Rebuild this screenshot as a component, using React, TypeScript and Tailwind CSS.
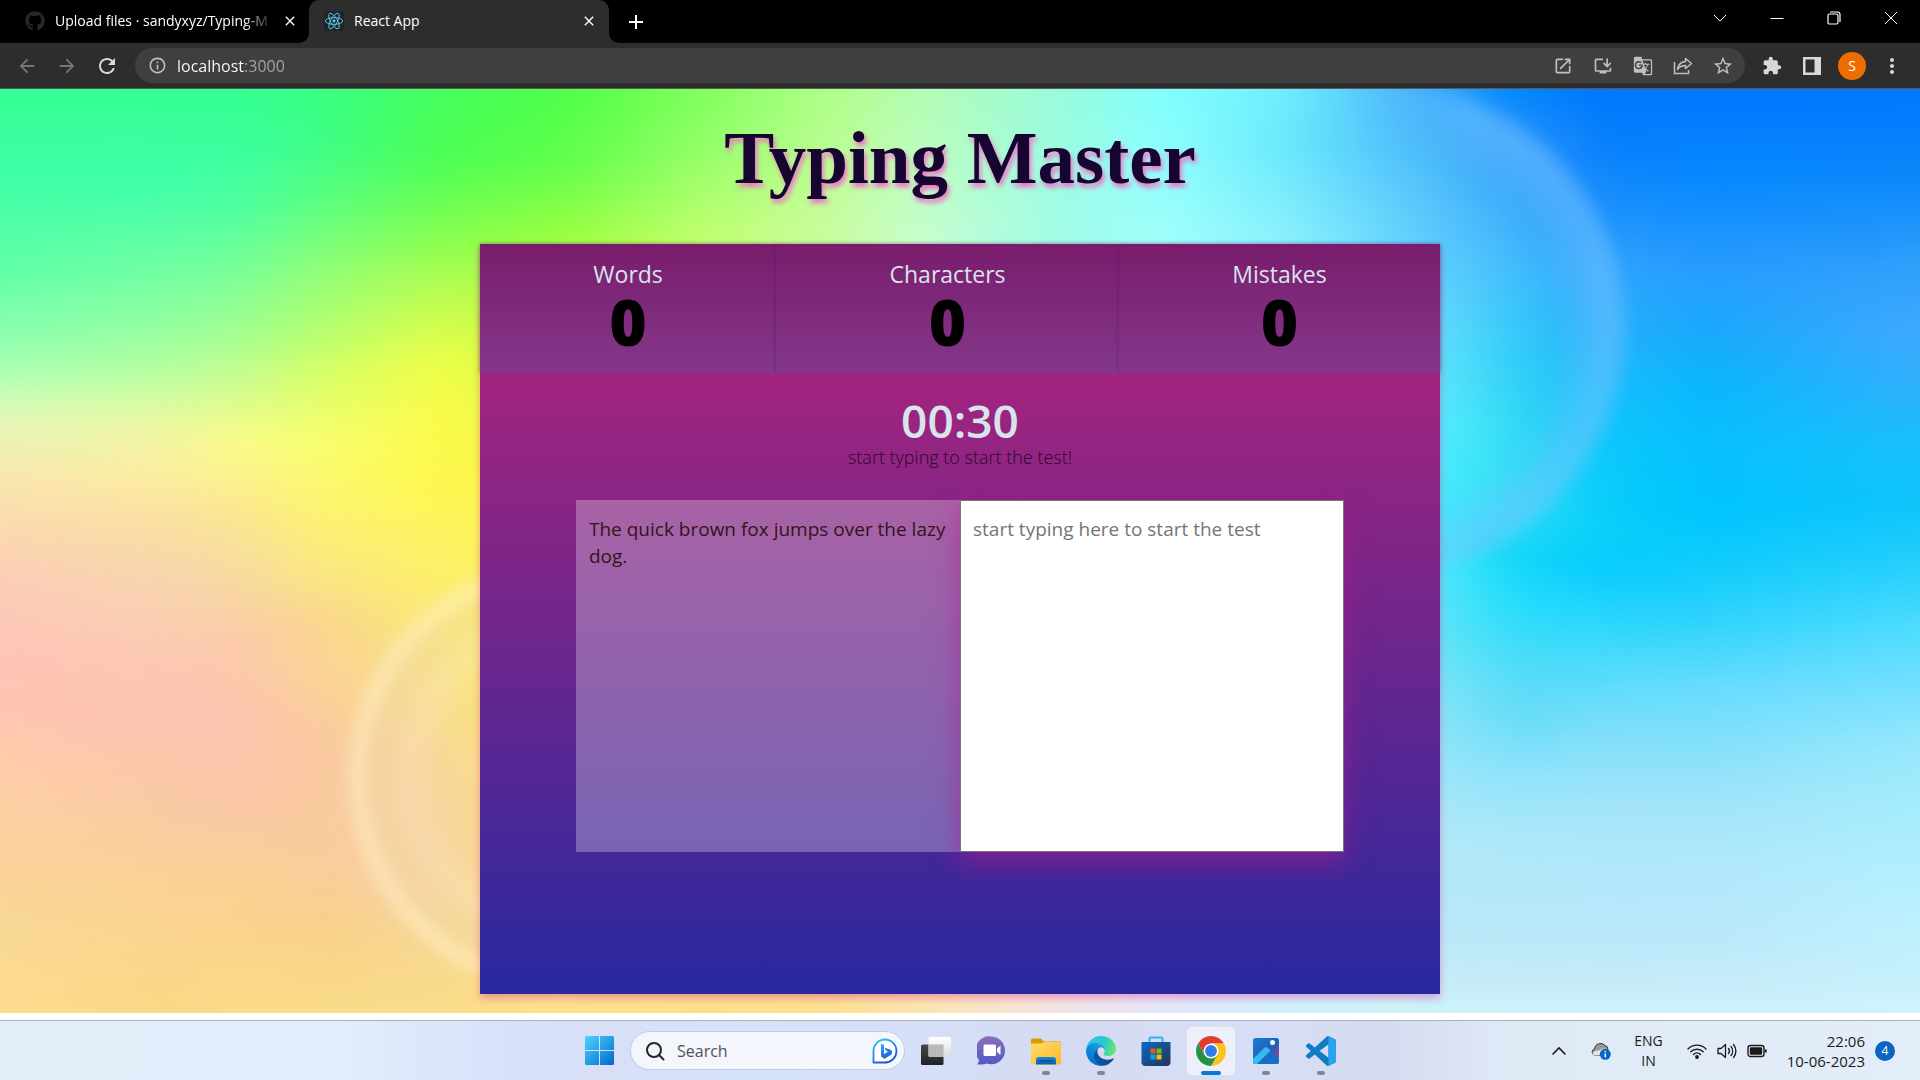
import React, { useState } from "react";
import { FaGithub } from "react-icons/fa";
import {
  MdArrowBack,
  MdArrowForward,
  MdRefresh,
  MdOutlineInfo,
  MdOpenInNew,
  MdOutlineInstallDesktop,
  MdGTranslate,
  MdStarOutline,
  MdExtension,
  MdMoreVert,
  MdClose,
  MdAdd,
} from "react-icons/md";

type Column = { x: number; stops: [number, string][] };

/* Colour columns of the wallpaper; colours blend from each column to the next. */
const columns: Column[] = [
  { x: 0, stops: [[0, "#35ff95"], [84, "#3effa6"], [180, "#60ffa8"], [240, "#88ffb0"], [288, "#b0ffb4"], [330, "#e4f8b8"], [390, "#fae6b0"], [444, "#fcd8b0"], [498, "#fcccb8"], [570, "#ffc4b8"], [630, "#ffc6b2"], [690, "#ffcea8"], [780, "#fcd29a"], [840, "#f8d894"], [925, "#ffdc90"]] },
  { x: 160, stops: [[0, "#35ff93"], [96, "#40ffaa"], [180, "#70ffa4"], [240, "#94ffa0"], [288, "#bcffa0"], [330, "#e8f8a4"], [390, "#fdeca0"], [444, "#f8dca4"], [498, "#f8d4b0"], [570, "#fbc8b2"], [630, "#fbc4b2"], [690, "#fac8a8"], [780, "#fad098"], [840, "#fad490"], [925, "#f8d884"]] },
  { x: 240, stops: [[0, "#35ff93"], [66, "#3cffa0"], [120, "#50ffa0"], [180, "#78ff98"], [240, "#a0ff90"], [288, "#c8fc90"], [354, "#fcfc88"], [420, "#fae890"], [480, "#f6dca0"], [540, "#fccca8"], [630, "#fbc4b0"], [720, "#fac8a8"], [780, "#fad096"], [850, "#fad48c"], [925, "#fadc88"]] },
  { x: 320, stops: [[0, "#38ff84"], [60, "#40fe88"], [120, "#60ff80"], [180, "#90ff78"], [240, "#b4ff70"], [288, "#d8ff68"], [354, "#f8fe70"], [420, "#fdf470"], [480, "#fae880"], [540, "#fad490"], [576, "#fcd494"], [660, "#fac8a0"], [780, "#facc9c"], [840, "#f8d088"], [925, "#fadc88"]] },
  { x: 440, stops: [[0, "#44ff5c"], [78, "#50ff54"], [150, "#88ff50"], [210, "#c0fc50"], [270, "#ecff48"], [330, "#fbfb48"], [390, "#fdf84c"], [450, "#fcf464"], [498, "#fcee6c"], [540, "#fae878"], [576, "#f6e284"], [660, "#f8d898"], [720, "#f8d4a0"], [810, "#f6d4a0"], [870, "#f8d890"], [925, "#fadc88"]] },
  { x: 570, stops: [[0, "#50ff48"], [70, "#60ff4c"], [155, "#a0ff40"], [400, "#fcf850"], [925, "#ffe08c"]] },
  { x: 700, stops: [[0, "#80ff5c"], [70, "#98ff68"], [155, "#c4ff70"], [925, "#fbe08c"]] },
  { x: 830, stops: [[0, "#b0ff88"], [155, "#ccfca0"], [925, "#fce090"]] },
  { x: 920, stops: [[0, "#b4fcb4"], [155, "#c8ffd0"], [925, "#fce4b0"]] },
  { x: 1060, stops: [[0, "#98fcdc"], [155, "#a0fce8"], [925, "#f4e4e4"]] },
  { x: 1166, stops: [[0, "#80ffff"], [155, "#a0fffc"], [925, "#e4e8fc"]] },
  { x: 1290, stops: [[0, "#70ecfc"], [60, "#68e8fc"], [155, "#8cf0fc"], [925, "#d0f0fc"]] },
  { x: 1390, stops: [[0, "#4cbcfc"], [60, "#54c4fc"], [155, "#68d8fc"], [925, "#ccf4fa"]] },
  { x: 1440, stops: [[0, "#2ca4fc"], [60, "#48b8f8"], [156, "#5cc8fc"], [246, "#60dcfc"], [330, "#54ecfc"], [420, "#40ecfc"], [474, "#48e8fc"], [540, "#58e4f8"], [600, "#78e4f8"], [660, "#90e4f8"], [750, "#b0e8f8"], [840, "#b8e8f8"], [900, "#c8ecf8"], [925, "#ccf4fc"]] },
  { x: 1520, stops: [[0, "#0084fc"], [60, "#3098fc"], [120, "#3cacfc"], [180, "#40bcfc"], [270, "#30ccf8"], [360, "#30dcf4"], [420, "#30dcf8"], [468, "#10d4f8"], [510, "#20dcfc"], [570, "#48dcf8"], [630, "#68dcf8"], [690, "#90e4fc"], [750, "#ace8f8"], [840, "#b8e8f8"], [900, "#c8ecf8"], [925, "#ccf4fc"]] },
  { x: 1600, stops: [[0, "#0078fc"], [60, "#0880fc"], [120, "#1c90fc"], [180, "#30a4fc"], [240, "#28b0fc"], [312, "#18c0fc"], [360, "#0cc8fc"], [444, "#08d0f8"], [480, "#08ccff"], [540, "#30d8fc"], [600, "#60dcfc"], [660, "#88e0fa"], [720, "#a4e4fa"], [780, "#b0e8fa"], [840, "#b8e8fa"], [900, "#c8ecf8"], [925, "#d0f4fc"]] },
  { x: 1700, stops: [[0, "#0078ff"], [90, "#0888ff"], [180, "#289cff"], [240, "#18a8fc"], [300, "#08b8fc"], [360, "#08c0fe"], [420, "#00c4ff"], [480, "#10ccfc"], [540, "#34d4fc"], [600, "#68dcff"], [660, "#84e0fa"], [720, "#a4e4fa"], [780, "#b0e8fa"], [840, "#b8e8fa"], [900, "#c8ecfa"], [925, "#d0f4fc"]] },
  { x: 1920, stops: [[0, "#0078ff"], [90, "#0c88fa"], [180, "#30a0fa"], [240, "#40a8ff"], [300, "#30b0fc"], [360, "#18c0fc"], [420, "#10c4fc"], [480, "#28d0fc"], [540, "#50dcff"], [600, "#74e0ff"], [660, "#98e8fc"], [720, "#a4ecfc"], [810, "#b8f0ff"], [900, "#c8f0fc"], [925, "#d0f4fc"]] },
];

function Wallpaper() {
  return (
    <svg className="absolute inset-0 h-full w-full" viewBox="0 0 1920 925" preserveAspectRatio="none" aria-hidden="true">
      <defs>
        {columns.map((c, i) => (
          <linearGradient key={c.x} id={`col${i}`} gradientUnits="userSpaceOnUse" x1="0" y1="0" x2="0" y2="925">
            {c.stops.map(([y, color]) => (
              <stop key={y} offset={y / 925} stopColor={color} />
            ))}
          </linearGradient>
        ))}
        {columns.slice(1).map((c, i) => (
          <React.Fragment key={c.x}>
            <linearGradient id={`fade${i + 1}`} gradientUnits="userSpaceOnUse" x1={columns[i].x} y1="0" x2={c.x} y2="0">
              <stop offset="0" stopColor="#fff" stopOpacity="0" />
              <stop offset="1" stopColor="#fff" />
            </linearGradient>
            <mask id={`mask${i + 1}`} maskUnits="userSpaceOnUse" x="-80" y="-80" width="2080" height="1085">
              <rect x="-80" y="-80" width="2080" height="1085" fill={`url(#fade${i + 1})`} />
            </mask>
          </React.Fragment>
        ))}
        <filter id="blend" filterUnits="userSpaceOnUse" x="-80" y="-80" width="2080" height="1085" colorInterpolationFilters="sRGB">
          <feGaussianBlur stdDeviation="20 8" />
        </filter>
        <filter id="soft" x="-20%" y="-20%" width="140%" height="140%" colorInterpolationFilters="sRGB">
          <feGaussianBlur stdDeviation="6" />
        </filter>
        <radialGradient id="leftRing">
          <stop offset=".55" stopColor="#fff0c8" stopOpacity="0" />
          <stop offset=".7" stopColor="#ffe8c8" stopOpacity=".3" />
          <stop offset=".8" stopColor="#f0d8a8" stopOpacity=".35" />
          <stop offset=".86" stopColor="#f0d8a8" stopOpacity=".35" />
          <stop offset=".93" stopColor="#fff0c8" stopOpacity=".6" />
          <stop offset="1" stopColor="#fff0c8" stopOpacity=".1" />
        </radialGradient>
        <radialGradient id="rightRing">
          <stop offset=".7" stopColor="#70c0ff" stopOpacity="0" />
          <stop offset=".9" stopColor="#78c4ff" stopOpacity=".5" />
          <stop offset=".95" stopColor="#78c4ff" stopOpacity=".45" />
          <stop offset="1" stopColor="#78c4ff" stopOpacity=".12" />
        </radialGradient>
        <linearGradient id="ringFade" gradientUnits="userSpaceOnUse" x1="1360" y1="0" x2="1470" y2="0">
          <stop offset="0" stopColor="#fff" stopOpacity="0" />
          <stop offset="1" stopColor="#fff" />
        </linearGradient>
        <mask id="ringMask" maskUnits="userSpaceOnUse" x="1300" y="-80" width="500" height="800">
          <rect x="1300" y="-80" width="500" height="800" fill="url(#ringFade)" />
        </mask>
      </defs>
      <g filter="url(#blend)">
        {columns.map((c, i) => (
          <rect key={c.x} x="-80" y="-80" width="2080" height="1085" fill={`url(#col${i})`} mask={i ? `url(#mask${i})` : undefined} />
        ))}
      </g>
      <circle cx="565" cy="688" r="222" fill="url(#leftRing)" filter="url(#soft)" />
      <g mask="url(#ringMask)">
        <circle cx="1378" cy="240" r="252" fill="url(#rightRing)" filter="url(#soft)" />
      </g>
    </svg>
  );
}

function ReactLogo() {
  return (
    <svg className="size-5 rounded-xs bg-[#20232a]" viewBox="-12 -12 24 24" fill="none" stroke="#61dafb" aria-hidden="true">
      <circle r="1.7" fill="#61dafb" stroke="none" />
      <ellipse rx="10.5" ry="4" />
      <ellipse rx="10.5" ry="4" transform="rotate(60)" />
      <ellipse rx="10.5" ry="4" transform="rotate(120)" />
    </svg>
  );
}

function IconButton({ label, className, children }: { label: string; className?: string; children: React.ReactNode }) {
  return (
    <button type="button" aria-label={label} className={`flex h-8 w-10 shrink-0 items-center justify-center ${className ?? ""}`}>
      {children}
    </button>
  );
}

function TabStrip() {
  return (
    <header className="flex h-[43px] bg-black text-sm text-white">
      <div className="flex w-[309px] items-center pr-2 pb-[2px] pl-[25px]">
        <FaGithub className="size-5 shrink-0 text-[#24292e]" />
        <span className="ml-[10px] w-[219px] overflow-hidden whitespace-nowrap [mask-image:linear-gradient(to_right,black_86%,transparent)]">
          Upload files · sandyxyz/Typing-M
        </span>
        <button type="button" aria-label="Close Upload files tab" className="ml-2 shrink-0">
          <MdClose className="size-4" />
        </button>
      </div>
      <div className="relative flex w-[300px] items-center rounded-t-[10px] bg-[#2d2d2d] pr-3 pb-[2px] pl-[15px]">
        <svg className="absolute bottom-0 -left-[10px] size-[10px]" viewBox="0 0 10 10" aria-hidden="true">
          <path d="M0 10A10 10 0 0 0 10 0V10Z" fill="#2d2d2d" />
        </svg>
        <svg className="absolute -right-[10px] bottom-0 size-[10px]" viewBox="0 0 10 10" aria-hidden="true">
          <path d="M10 10A10 10 0 0 1 0 0V10Z" fill="#2d2d2d" />
        </svg>
        <ReactLogo />
        <span className="ml-[10px] flex-1">React App</span>
        <button type="button" aria-label="Close React App tab">
          <MdClose className="size-4" />
        </button>
      </div>
      <button type="button" aria-label="New tab" className="ml-[15px]">
        <MdAdd className="size-6" />
      </button>
      <div className="ml-auto flex h-9 pr-px">
        <button type="button" aria-label="Search tabs" className="flex w-[57px] items-center justify-center">
          <svg className="size-4" viewBox="0 0 16 16" fill="none" stroke="#fff"><path d="M2 5l6 6 6-6" /></svg>
        </button>
        <button type="button" aria-label="Minimize" className="flex w-[57px] items-center justify-center">
          <svg className="size-4" viewBox="0 0 16 16" fill="none" stroke="#fff"><path d="M1.500 8.500h13" /></svg>
        </button>
        <button type="button" aria-label="Restore" className="flex w-[57px] items-center justify-center">
          <svg className="size-4" viewBox="0 0 16 16" fill="none" stroke="#fff" strokeWidth="1.200"><rect x="2" y="4" width="10" height="10" rx="1.500" /><path d="M4 2h7.500a2.500 2.500 0 0 1 2.500 2.500V12" /></svg>
        </button>
        <button type="button" aria-label="Close window" className="flex w-[57px] items-center justify-center">
          <svg className="size-4" viewBox="0 0 16 16" fill="none" stroke="#fff"><path d="M2 2l12 12M14 2L2 14" /></svg>
        </button>
      </div>
    </header>
  );
}

function Toolbar() {
  return (
    <nav className="flex h-[46px] items-center border-b border-[#5a5a5a] bg-[#2d2d2d] pl-[7px] text-[#d8d8d8]">
      <IconButton label="Back" className="text-[#767676]"><MdArrowBack className="size-[22px]" /></IconButton>
      <IconButton label="Forward" className="text-[#767676]"><MdArrowForward className="size-[22px]" /></IconButton>
      <IconButton label="Reload"><MdRefresh className="size-6" /></IconButton>
      <div className="ml-2 flex h-[35px] flex-1 items-center rounded-full bg-[#3f3f3f] pr-[2px] pl-[13px] text-[#c0c0c0]">
        <MdOutlineInfo className="size-[19px] shrink-0" />
        <input
          aria-label="Address"
          defaultValue="localhost:3000"
          className="ml-[10px] h-7 min-w-0 flex-1 bg-[linear-gradient(90deg,#fff_67px,#a8a8a8_67px)] bg-clip-text text-base text-transparent outline-none"
        />
        <IconButton label="Open in app"><MdOpenInNew className="size-5" /></IconButton>
        <IconButton label="Install app"><MdOutlineInstallDesktop className="size-5" /></IconButton>
        <IconButton label="Translate"><MdGTranslate className="size-5" /></IconButton>
        <IconButton label="Share">
          <svg className="size-5" viewBox="0 0 20 20" fill="none" stroke="currentColor" strokeWidth="1.500"><path d="M1.500 6v11.500h14V14" /><path d="M12.500 2.500l6 5-6 5v-3c-4 0-6 1-8 4 .500-4.500 3.500-7.500 8-8z" strokeLinejoin="round" /></svg>
        </IconButton>
        <IconButton label="Bookmark"><MdStarOutline className="size-[22px]" /></IconButton>
      </div>
      <div className="ml-[7px] flex pr-2">
        <IconButton label="Extensions"><MdExtension className="size-5" /></IconButton>
        <IconButton label="Side panel">
          <svg className="size-[18px]" viewBox="0 0 18 18" fill="currentColor"><path fillRule="evenodd" d="M0 0h18v18H0zM2.500 2.500v13h9v-13z" /></svg>
        </IconButton>
        <IconButton label="Profile"><span className="flex size-7 items-center justify-center rounded-full bg-[#ef6c00] text-sm text-white">S</span></IconButton>
        <IconButton label="Menu"><MdMoreVert className="size-6" /></IconButton>
      </div>
    </nav>
  );
}

function Stat({ label, value }: { label: string; value: number }) {
  return (
    <div className="flex-auto bg-linear-to-b/srgb from-[#7a1c6c] to-[#84388b] pt-3 pb-[22px] text-center shadow-[0_0_4px_rgba(60,20,90,0.5)]">
      <dt className="text-[23px] leading-9 text-[#d8e4ec]">{label}</dt>
      <dd className="text-[64px] leading-[59px] font-extrabold text-black">{value}</dd>
    </div>
  );
}

function TypingTest() {
  const [typed, setTyped] = useState("");
  return (
    <main className="relative flex-1 border-b-[7px] border-white pb-[18px]">
      <Wallpaper />
      <div className="relative">
        <h1 className="pt-5 text-center font-['Liberation_Serif',serif] text-[75px] leading-[98px] font-bold text-[#150530] [text-shadow:2px_4px_5px_#f070c8]">
          Typing Master
        </h1>
        <section className="mx-auto mt-[37px] w-1/2 shadow-[0_4px_8px_rgba(220,40,140,0.4)]">
          <dl className="flex">
            <Stat label="Words" value={0} />
            <Stat label="Characters" value={0} />
            <Stat label="Mistakes" value={0} />
          </dl>
          <div className="relative bg-linear-to-b/srgb from-[#a2247e] to-[#2828a0] px-[10%] pt-5 pb-[142px] text-center">
            <p className="text-[46px] leading-[54px] font-semibold text-[#d8e4ec]">00:30</p>
            <p className="text-lg leading-5 font-light text-[#2c0828]">start typing to start the test!</p>
            <div className="mt-[33px] flex h-[352px] text-left text-[19px] leading-[27px]">
              <p className="w-1/2 bg-[#f2f2f6]/30 px-[13px] py-4 text-[#331518]">The quick brown fox jumps over the lazy dog.</p>
              <textarea
                aria-label="Typing area"
                value={typed}
                onChange={(e) => setTyped(e.target.value)}
                placeholder="start typing here to start the test"
                className="w-1/2 resize-none border border-[#767676] bg-white px-3 py-[15px] shadow-[0_10px_24px_rgba(170,30,140,0.6)] outline-none placeholder:text-[#757575]"
              />
            </div>
          </div>
        </section>
      </div>
    </main>
  );
}

function AppButton({ label, state, children }: { label: string; state?: "open" | "active"; children: React.ReactNode }) {
  return (
    <button
      type="button"
      aria-label={label}
      className={`relative flex size-12 items-center justify-center rounded-[5px] ${state === "active" ? "bg-[#edf0fa] shadow-[0_0_1px_1px_#dde1ee]" : ""}`}
    >
      {children}
      {state && (
        <span className={state === "active" ? "absolute bottom-0 h-1 w-5 rounded-full bg-[#0a78d4]" : "absolute bottom-0 h-1 w-2 rounded-full bg-[#82868f]"} />
      )}
    </button>
  );
}

function Taskbar() {
  return (
    <footer className="grid h-[60px] grid-cols-[1fr_auto_1fr] items-center border-t border-[#a9b0bf] bg-[linear-gradient(90deg,#e2eefa_0%,#e0edfa_18%,#d6e3fb_26%,#d8dff7_31%,#d4e3fa_39%,#d5dff8_48%,#d5daf0_56%,#d6dff8_64%,#d6dbef_72%,#e0eaf7_79%,#e2edf9_100%)] text-[#1b1b1b]">
      <div />
      <div className="flex items-center gap-[7px]">
        <AppButton label="Start">
          <svg className="size-[29px]" viewBox="0 0 29 29">
            <defs><linearGradient id="win" x1="0" y1="0" x2="29" y2="29" gradientUnits="userSpaceOnUse"><stop stopColor="#4fd4ff" /><stop offset="1" stopColor="#0068cc" /></linearGradient></defs>
            <path fill="url(#win)" d="M1.500 0H14v14H0V1.500A1.500 1.500 0 0 1 1.500 0zM15 0h12.500A1.500 1.500 0 0 1 29 1.500V14H15zM0 15h14v14H1.500A1.500 1.500 0 0 1 0 27.500zM15 15h14v12.500a1.500 1.500 0 0 1-1.500 1.500H15z" />
          </svg>
        </AppButton>
        <div className="flex h-[39px] w-[275px] items-center rounded-full border border-[#c3cbe4] bg-[#f3f6fd] pr-[6px] pl-[14px]">
          <svg className="size-5 shrink-0" viewBox="0 0 20 20" fill="none" stroke="#252525" strokeWidth="2"><circle cx="9" cy="9" r="7" /><path d="M14 14l4.500 4.500" strokeLinecap="round" /></svg>
          <input aria-label="Search" placeholder="Search" className="ml-3 h-7 min-w-0 flex-1 bg-transparent text-base outline-none placeholder:text-[#505258]" />
          <svg className="size-[26px] shrink-0" viewBox="0 0 26 26" aria-hidden="true">
            <defs><linearGradient id="bing" x1="3" y1="0" x2="16" y2="26" gradientUnits="userSpaceOnUse"><stop stopColor="#2ed0f0" /><stop offset=".5" stopColor="#2a8cf0" /><stop offset="1" stopColor="#1f45c4" /></linearGradient></defs>
            <path d="M1.500 24.500V13A11.500 11.500 0 1 1 13 24.500z" fill="#fff" stroke="url(#bing)" strokeWidth="1.800" strokeLinejoin="round" />
            <path d="M9 5.500l3 1.500v9l4-2.200-2.200-1-1.300-3.300 6.200 2.300c1.800.800 1.900 3.800.300 4.900l-6.500 4-3.500-2.200z" fill="url(#bing)" />
          </svg>
        </div>
        <AppButton label="Task view">
          <svg className="size-[30px]" viewBox="0 0 30 30">
            <defs>
              <linearGradient id="tv" x1="0" y1="0" x2="0" y2="1"><stop stopColor="#45474a" /><stop offset="1" stopColor="#202224" /></linearGradient>
              <linearGradient id="tw" x1="0" y1="0" x2="0" y2="1"><stop stopColor="#fff" /><stop offset="1" stopColor="#d9dadd" /></linearGradient>
            </defs>
            <rect y="8.500" width="22.500" height="20.500" rx="1.500" fill="url(#tv)" />
            <rect x="7.500" y="1" width="22.500" height="20" rx="1.500" fill="url(#tw)" />
            <path d="M7.500 8.500h15V21H9a1.500 1.500 0 0 1-1.500-1.500z" fill="#b9b9bb" />
          </svg>
        </AppButton>
        <AppButton label="Chat">
          <svg className="size-[29px]" viewBox="0 0 29 29">
            <defs><linearGradient id="chat" x1="0" y1="0" x2="0" y2="1"><stop stopColor="#8c6fb4" /><stop offset="1" stopColor="#5059c9" /></linearGradient></defs>
            <path d="M14.500 .5A13.900 13.900 0 1 1 9.500 27.500c-2 1-5 1.200-9.500 1 1.500-1.500 2-3 1.800-5A13.900 13.900 0 0 1 14.500 .5z" fill="url(#chat)" />
            <rect x="6.500" y="8.500" width="12.500" height="11.500" rx="1.500" fill="#fff" />
            <path d="M20 12.500l3.500-3v9.500l-3.500-3z" fill="#fff" />
          </svg>
        </AppButton>
        <AppButton label="File Explorer" state="open">
          <svg className="size-[30px]" viewBox="0 0 30 30">
            <defs>
              <linearGradient id="fold" x1="0" y1="0" x2="1" y2="1"><stop stopColor="#ffdd6b" /><stop offset="1" stopColor="#fdb92a" /></linearGradient>
              <linearGradient id="fold2" x1="0" y1="0" x2="0" y2="1"><stop stopColor="#1287dc" /><stop offset="1" stopColor="#0c5fae" /></linearGradient>
            </defs>
            <path d="M0 9V4a1.500 1.500 0 0 1 1.500-1.500h8.300L13 5.500h15.500A1.500 1.500 0 0 1 30 7v3z" fill="#dc9a05" />
            <path d="M0 7.500h10L13 6h15.500A1.500 1.500 0 0 1 30 7.500V27a1.500 1.500 0 0 1-1.500 1.500h-27A1.500 1.500 0 0 1 0 27z" fill="url(#fold)" />
            <path d="M5 28.500V24a3 3 0 0 1 3-3h14a3 3 0 0 1 3 3v4.500z" fill="url(#fold2)" />
            <path d="M8.500 25h13" stroke="#0a3f7c" />
          </svg>
        </AppButton>
        <AppButton label="Edge" state="open">
          <svg className="size-[30px]" viewBox="0 0 256 256">
            <defs>
              <linearGradient id="e1" x1="60" y1="175" x2="240" y2="175" gradientUnits="userSpaceOnUse"><stop stopColor="#0c59a4" /><stop offset="1" stopColor="#114a8b" /></linearGradient>
              <linearGradient id="e2" x1="150" y1="90" x2="45" y2="210" gradientUnits="userSpaceOnUse"><stop stopColor="#1b9de2" /><stop offset=".3" stopColor="#1595df" /><stop offset="1" stopColor="#0078d4" /></linearGradient>
              <linearGradient id="e3" x1="20" y1="60" x2="250" y2="130" gradientUnits="userSpaceOnUse"><stop stopColor="#35c1f1" /><stop offset=".5" stopColor="#2cc3d2" /><stop offset="1" stopColor="#66eb6e" /></linearGradient>
            </defs>
            <path fill="url(#e1)" d="M231 190.500c-3.400 1.800-6.900 3.400-10.500 4.700a101.900 101.900 0 0 1-35.900 6.400c-47.300 0-88.500-32.500-88.500-74.300 0-11.400 6.400-21.900 16.400-27.300-42.800 1.800-53.800 46.400-53.800 72.500 0 73.900 68.100 81.400 82.800 81.400 7.900 0 19.800-2.300 27-4.600l1.300-.4a128.300 128.300 0 0 0 66.600-52.800 4 4 0 0 0-5.400-5.600z" />
            <path fill="url(#e2)" d="M105.700 241.400a79.200 79.200 0 0 1-22.700-21.300 80.700 80.700 0 0 1 29.500-120c3.200-1.500 8.500-4.200 15.600-4.100a32.400 32.400 0 0 1 25.700 13 31.900 31.900 0 0 1 6.300 18.700c0-.2 24.500-79.600-80-79.600-43.900 0-80 41.700-80 78.200a130.200 130.200 0 0 0 12.100 56 128 128 0 0 0 156.400 67 75.500 75.500 0 0 1-62.900-7.900z" />
            <path fill="url(#e3)" d="M152.300 148.900c-.8 1-3.300 2.500-3.300 5.700 0 2.600 1.700 5.100 4.700 7.200 14.400 10 41.500 8.700 41.600 8.700 10.700 0 21.100-2.900 30.300-8.300a61.400 61.400 0 0 0 30.400-52.900c.3-22.400-8-37.300-11.300-43.900C223.500 23.900 177.700 0 128 0A128 128 0 0 0 0 126.200c.5-36.500 36.800-66 80-66 3.500 0 23.500.3 42 10 16.300 8.600 24.900 18.900 30.800 29.200 6.200 10.700 7.300 24.100 7.300 29.500s-2.700 13.300-7.800 20z" />
          </svg>
        </AppButton>
        <AppButton label="Microsoft Store">
          <svg className="size-[30px]" viewBox="0 0 30 30">
            <defs><linearGradient id="store" x1="0" y1="0" x2="1" y2="1"><stop stopColor="#0a6cc0" /><stop offset="1" stopColor="#243358" /></linearGradient></defs>
            <path d="M8.500 7V2.500a1 1 0 0 1 1-1h11a1 1 0 0 1 1 1V7" fill="none" stroke="#2cb5ee" strokeWidth="2" />
            <path d="M.5 6h29v20a4 4 0 0 1-4 4h-21a4 4 0 0 1-4-4z" fill="url(#store)" />
            <path fill="#f25022" d="M9.500 12.500h5v5h-5z" /><path fill="#7fba00" d="M15.500 12.500h5v5h-5z" /><path fill="#00a4ef" d="M9.500 18.500h5v5h-5z" /><path fill="#ffb900" d="M15.500 18.500h5v5h-5z" />
          </svg>
        </AppButton>
        <AppButton label="Chrome" state="active">
          <svg className="size-[30px]" viewBox="0 0 48 48">
            <path fill="#e33b2e" d="M24 12h20.780A24 24 0 0 0 3.220 12l10.390 18z" />
            <path fill="#fcc31e" d="M34.390 30L24 48a24 24 0 0 0 20.780-36H24z" />
            <path fill="#229342" d="M13.610 30L3.220 12A24 24 0 0 0 24 48l10.390-18z" />
            <circle cx="24" cy="24" r="12" fill="#fff" /><circle cx="24" cy="24" r="9.500" fill="#2f7de9" />
          </svg>
        </AppButton>
        <AppButton label="Photos" state="open">
          <svg className="size-[26px]" viewBox="0 0 26 26">
            <defs>
              <linearGradient id="ph" x1="0" y1="0" x2="1" y2="1"><stop stopColor="#1a7fd8" /><stop offset=".55" stopColor="#1b62b4" /><stop offset=".8" stopColor="#7b4aa8" /><stop offset="1" stopColor="#2060b0" /></linearGradient>
              <linearGradient id="ph2" x1="0" y1="1" x2="1" y2="0"><stop stopColor="#2fc4f4" /><stop offset="1" stopColor="#3bb0ee" /></linearGradient>
              <clipPath id="phc"><rect width="26" height="26" rx="2.500" /></clipPath>
            </defs>
            <g clipPath="url(#phc)">
              <rect width="26" height="26" fill="url(#ph)" />
              <path d="M0 21L10.500 10.500a3.500 3.500 0 0 1 5 0L29 24v4H0z" fill="#156fc4" />
              <path d="M-1 22L10.500 10.500a3.500 3.500 0 0 1 5 0l2 2L3 27h-4z" fill="url(#ph2)" />
            </g>
            <circle cx="19.500" cy="4.500" r="2.500" fill="#fff" />
          </svg>
        </AppButton>
        <AppButton label="Visual Studio Code" state="open">
          <svg className="size-[30px]" viewBox="0 0 100 100">
            <path fill="#0f7cc4" fillRule="evenodd" d="M70.912 99.317a6.200 6.200 0 0 0 4.960-.191l20.589-9.906A6.250 6.250 0 0 0 100 83.587V16.413a6.250 6.250 0 0 0-3.539-5.632L75.873.874a6.230 6.230 0 0 0-7.104 1.210L29.355 38.040 12.187 25.010a4.160 4.160 0 0 0-5.318.236l-5.506 5.009a4.170 4.170 0 0 0-.004 6.162L16.247 50 1.359 63.583a4.170 4.170 0 0 0 .004 6.162l5.506 5.009a4.160 4.160 0 0 0 5.318.236l17.168-13.031 39.414 35.958a6.200 6.200 0 0 0 2.143 1.400zM75.015 27.300L45.110 50l29.905 22.701z" />
            <path fill="#28a3ee" d="M75.873.874l20.588 9.907A6.250 6.250 0 0 1 100 16.413v67.174a6.250 6.250 0 0 1-3.539 5.633l-20.589 9.906c-2.400 1.100-5.200.6-7.100-1.210 2.300 2.300 6.243.7 6.243-2.600V4.700c0-3.300-3.943-4.900-6.246-2.600 1.900-1.900 4.700-2.400 7.104-1.226z" />
          </svg>
        </AppButton>
      </div>
      <div className="flex items-center justify-end pr-[25px]">
        <button type="button" aria-label="Show hidden icons" className="mr-6">
          <svg className="size-4" viewBox="0 0 16 16" fill="none" stroke="#1b1b1b" strokeWidth="1.600"><path d="M2 11l6-6 6 6" strokeLinecap="round" /></svg>
        </button>
        <button type="button" aria-label="OneDrive" className="mr-[23px]">
          <svg className="size-5" viewBox="0 0 20 20">
            <path d="M3 14a3.200 3.200 0 0 1 .5-6A6 6 0 0 1 14 4.500a4 4 0 0 1 3 4L8 14.500z" fill="#9a9a9a" stroke="#333" />
            <path d="M1.500 12C4 9 7 10 10 8.500s5-1 6.500 0L8 14.500H4A3 3 0 0 1 1.500 12z" fill="#e4e4e4" />
            <circle cx="14.300" cy="13.300" r="5.500" fill="#0a64c0" /><path d="M14.300 12.500v3.800M14.300 10v1.300" stroke="#fff" strokeWidth="1.500" />
          </svg>
        </button>
        <button type="button" className="mr-6 text-center text-sm leading-5">ENG<br />IN</button>
        <button type="button" aria-label="Network, volume and battery" className="mr-5 flex items-center gap-[10px]">
          <svg className="size-5" viewBox="0 0 20 20" fill="none" stroke="#1b1b1b" strokeWidth="1.400" strokeLinecap="round"><path d="M1 8a12.500 12.500 0 0 1 18 0M3.800 10.800a8.700 8.700 0 0 1 12.400 0M6.500 13.500a5 5 0 0 1 7 0" /><circle cx="10" cy="16" r="1.200" fill="#1b1b1b" /></svg>
          <svg className="size-5" viewBox="0 0 20 20" fill="none" stroke="#1b1b1b" strokeWidth="1.300" strokeLinecap="round" strokeLinejoin="round"><path d="M1 7.500h3L8.500 3.500v13L4 12.500H1zM11.500 7.500a4 4 0 0 1 0 5M14 5.500a7 7 0 0 1 0 9M16.500 3.500a10 10 0 0 1 0 13" /></svg>
          <svg className="size-5" viewBox="0 0 20 20" fill="none" stroke="#1b1b1b" strokeWidth="1.400"><rect x="1" y="4.500" width="16" height="11" rx="2.500" /><rect x="3.500" y="7" width="11" height="6" rx=".5" fill="#1b1b1b" /><path d="M18.700 8.500v3" strokeWidth="2" /></svg>
        </button>
        <button type="button" className="flex items-center gap-[10px] text-right text-[15px] leading-5">
          <span>22:06<br />10-06-2023</span>
          <span className="flex size-5 items-center justify-center rounded-full bg-[#0a64c0] text-xs text-white">4</span>
        </button>
      </div>
    </footer>
  );
}

export default function App() {
  return (
    <div className="flex min-h-screen flex-col bg-white font-['Open_Sans','Noto_Sans',sans-serif]">
      <TabStrip />
      <Toolbar />
      <TypingTest />
      <Taskbar />
    </div>
  );
}
